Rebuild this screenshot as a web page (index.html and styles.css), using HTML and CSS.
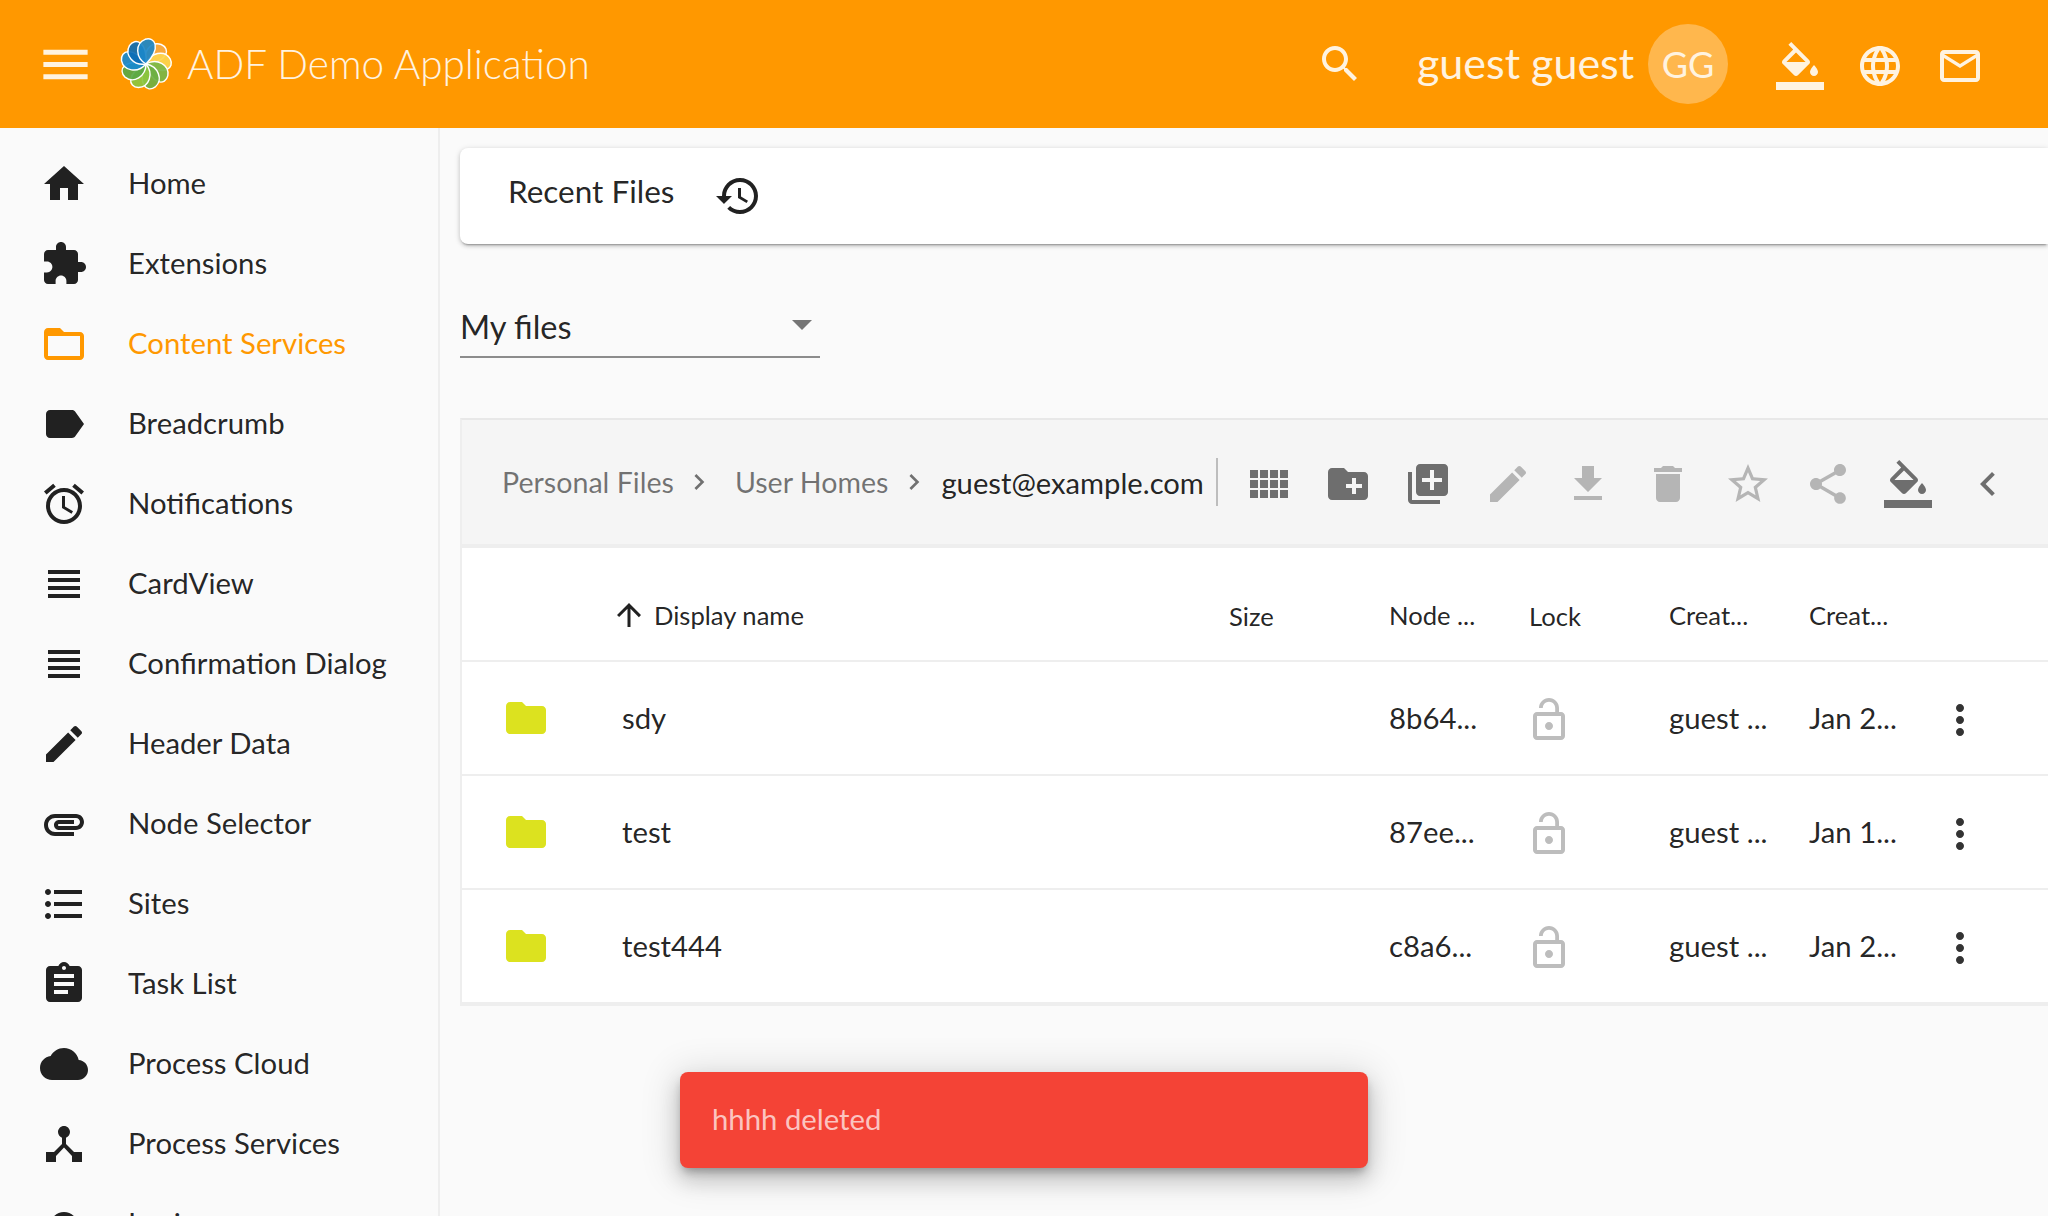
FILE: index.html
```html
<!DOCTYPE html>
<html lang="en">
<head>
    <meta charset="UTF-8">
    <title>ADF Demo Application</title>
    <link rel="stylesheet" href="styles.css">
</head>
<body>
    <!-- icon sprite -->
    <svg class="sprite" xmlns="http://www.w3.org/2000/svg">
        <symbol id="i-menu" viewBox="0 0 24 24"><path d="M3 18h18v-2H3v2zm0-5h18v-2H3v2zm0-7v2h18V6H3z"/></symbol>
        <symbol id="i-search" viewBox="0 0 24 24"><path d="M15.5 14h-.79l-.28-.27C15.41 12.59 16 11.11 16 9.5 16 5.91 13.09 3 9.5 3S3 5.91 3 9.5 5.91 16 9.5 16c1.61 0 3.09-.59 4.23-1.57l.27.28v.79l5 4.99L20.49 19l-4.99-5zm-6 0C7.01 14 5 11.99 5 9.5S7.01 5 9.5 5 14 7.01 14 9.5 11.99 14 9.5 14z"/></symbol>
        <symbol id="i-fill" viewBox="0 0 24 24"><path d="M16.56 8.94L7.62 0 6.21 1.41l2.38 2.38-5.15 5.15c-.59.59-.59 1.54 0 2.12l5.5 5.5c.29.29.68.44 1.06.44s.77-.15 1.06-.44l5.5-5.5c.59-.58.59-1.53 0-2.12zM5.21 10L10 5.21 14.79 10H5.21zM19 11.5s-2 2.17-2 3.5c0 1.1.9 2 2 2s2-.9 2-2c0-1.33-2-3.5-2-3.5z"/><path d="M0 20h24v4H0z"/></symbol>
        <symbol id="i-language" viewBox="0 0 24 24"><path d="M11.99 2C6.47 2 2 6.48 2 12s4.47 10 9.99 10C17.52 22 22 17.52 22 12S17.52 2 11.99 2zm6.93 6h-2.95c-.32-1.25-.78-2.45-1.38-3.56 1.84.63 3.37 1.91 4.33 3.56zM12 4.04c.83 1.2 1.48 2.53 1.91 3.96h-3.82c.43-1.43 1.08-2.76 1.91-3.96zM4.26 14C4.1 13.36 4 12.69 4 12s.1-1.36.26-2h3.38c-.08.66-.14 1.32-.14 2 0 .68.06 1.34.14 2H4.26zm.82 2h2.95c.32 1.25.78 2.45 1.38 3.56-1.84-.63-3.37-1.9-4.33-3.56zm2.95-8H5.08c.96-1.66 2.49-2.93 4.33-3.56C8.81 5.55 8.35 6.75 8.03 8zM12 19.96c-.83-1.2-1.48-2.53-1.91-3.96h3.82c-.43 1.43-1.08 2.76-1.91 3.96zM14.34 14H9.66c-.09-.66-.16-1.32-.16-2 0-.68.07-1.35.16-2h4.68c.09.65.16 1.32.16 2 0 .68-.07 1.34-.16 2zm.25 5.56c.6-1.11 1.06-2.31 1.38-3.56h2.95c-.96 1.65-2.49 2.93-4.33 3.56zM16.36 14c.08-.66.14-1.32.14-2 0-.68-.06-1.34-.14-2h3.38c.16.64.26 1.31.26 2s-.1 1.36-.26 2h-3.38z"/></symbol>
        <symbol id="i-mail" viewBox="0 0 24 24"><path d="M20 4H4c-1.1 0-1.99.9-1.99 2L2 18c0 1.1.9 2 2 2h16c1.1 0 2-.9 2-2V6c0-1.1-.9-2-2-2zm0 14H4V8l8 5 8-5v10zm-8-7L4 6h16l-8 5z"/></symbol>
        <symbol id="i-home" viewBox="0 0 24 24"><path d="M10 20v-6h4v6h5v-8h3L12 3 2 12h3v8z"/></symbol>
        <symbol id="i-extension" viewBox="0 0 24 24"><path d="M20.5 11H19V7c0-1.1-.9-2-2-2h-4V3.5C13 2.12 11.88 1 10.5 1S8 2.12 8 3.5V5H4c-1.1 0-1.99.9-1.99 2v3.8H3.5c1.49 0 2.7 1.21 2.7 2.7s-1.21 2.7-2.7 2.7H2V20c0 1.1.9 2 2 2h3.8v-1.5c0-1.49 1.21-2.7 2.7-2.7 1.49 0 2.7 1.21 2.7 2.7V22H17c1.1 0 2-.9 2-2v-4h1.5c1.38 0 2.5-1.12 2.5-2.5S21.88 11 20.5 11z"/></symbol>
        <symbol id="i-folder-open" viewBox="0 0 24 24"><path d="M20 6h-8l-2-2H4c-1.1 0-1.99.9-1.99 2L2 18c0 1.1.9 2 2 2h16c1.1 0 2-.9 2-2V8c0-1.1-.9-2-2-2zm0 12H4V8h16v10z"/></symbol>
        <symbol id="i-label" viewBox="0 0 24 24"><path d="M17.63 5.84C17.27 5.33 16.67 5 16 5L5 5.01C3.9 5.01 3 5.9 3 7v10c0 1.1.9 1.99 2 1.99L16 19c.67 0 1.27-.33 1.63-.84L22 12l-4.37-6.16z"/></symbol>
        <symbol id="i-alarm" viewBox="0 0 24 24"><path d="M22 5.72l-4.6-3.86-1.29 1.53 4.6 3.86L22 5.72zM7.88 3.39L6.6 1.86 2 5.71l1.29 1.53 4.59-3.85zM12.5 8H11v6l4.75 2.85.75-1.23-4-2.37V8zM12 4c-4.97 0-9 4.03-9 9s4.02 9 9 9c4.97 0 9-4.03 9-9s-4.03-9-9-9zm0 16c-3.87 0-7-3.13-7-7s3.13-7 7-7 7 3.13 7 7-3.13 7-7 7z"/></symbol>
        <symbol id="i-headline" viewBox="0 0 24 24"><path d="M4 15h16v-2H4v2zm0 4h16v-2H4v2zm0-8h16V9H4v2zm0-6v2h16V5H4z"/></symbol>
        <symbol id="i-edit" viewBox="0 0 24 24"><path d="M3 17.25V21h3.75L17.81 9.94l-3.75-3.75L3 17.25zM20.71 7.04c.39-.39.39-1.02 0-1.41l-2.34-2.34c-.39-.39-1.02-.39-1.41 0l-1.83 1.83 3.75 3.75 1.83-1.83z"/></symbol>
        <symbol id="i-attachment" viewBox="0 0 24 24"><path d="M2 12.5C2 9.46 4.46 7 7.5 7H18c2.21 0 4 1.79 4 4s-1.79 4-4 4H9.5C8.12 15 7 13.88 7 12.5S8.12 10 9.5 10H17v2H9.41c-.55 0-.55 1 0 1H18c1.1 0 2-.9 2-2s-.9-2-2-2H7.5C5.57 9 4 10.57 4 12.5S5.57 16 7.5 16H17v2H7.5C4.46 18 2 15.54 2 12.5z"/></symbol>
        <symbol id="i-list" viewBox="0 0 24 24"><path d="M4 10.5c-.83 0-1.5.67-1.5 1.5s.67 1.5 1.5 1.5 1.5-.67 1.5-1.5-.67-1.5-1.5-1.5zm0-6c-.83 0-1.5.67-1.5 1.5S3.17 7.5 4 7.5 5.5 6.83 5.5 6 4.83 4.5 4 4.5zm0 12c-.83 0-1.5.68-1.5 1.5s.68 1.5 1.5 1.5 1.5-.68 1.5-1.5-.67-1.5-1.5-1.5zM7 19h14v-2H7v2zm0-6h14v-2H7v2zm0-8v2h14V5H7z"/></symbol>
        <symbol id="i-assignment" viewBox="0 0 24 24"><path d="M19 3h-4.18C14.4 1.84 13.3 1 12 1c-1.3 0-2.4.84-2.82 2H5c-1.1 0-2 .9-2 2v14c0 1.1.9 2 2 2h14c1.1 0 2-.9 2-2V5c0-1.1-.9-2-2-2zm-7 0c.55 0 1 .45 1 1s-.45 1-1 1-1-.45-1-1 .45-1 1-1zm2 14H7v-2h7v2zm3-4H7v-2h10v2zm0-4H7V7h10v2z"/></symbol>
        <symbol id="i-cloud" viewBox="0 0 24 24"><path d="M19.35 10.04C18.67 6.59 15.64 4 12 4 9.11 4 6.6 5.64 5.35 8.04 2.34 8.36 0 10.91 0 14c0 3.31 2.69 6 6 6h13c2.76 0 5-2.24 5-5 0-2.64-2.05-4.78-4.65-4.96z"/></symbol>
        <symbol id="i-hub" viewBox="0 0 24 24"><path d="M17 16l-4-4V8.82C14.16 8.4 15 7.3 15 6c0-1.66-1.34-3-3-3S9 4.34 9 6c0 1.3.84 2.4 2 2.82V12l-4 4H3v5h5v-3.05l4-4.2 4 4.2V21h5v-5h-4z"/></symbol>
        <symbol id="i-login" viewBox="0 0 24 24"><path d="M12 6a7 7 0 1 0 0 14 7 7 0 0 0 0-14z"/></symbol>
        <symbol id="i-history" viewBox="0 0 24 24"><path d="M13 3c-4.97 0-9 4.03-9 9H1l3.89 3.89.07.14L9 12H6c0-3.87 3.13-7 7-7s7 3.13 7 7-3.13 7-7 7c-1.93 0-3.68-.79-4.94-2.06l-1.42 1.42C8.27 19.99 10.51 21 13 21c4.97 0 9-4.03 9-9s-4.03-9-9-9zm-1 5v5l4.28 2.54.72-1.21-3.5-2.08V8H12z"/></symbol>
        <symbol id="i-comfy" viewBox="0 0 24 24"><path d="M3 9h4V5H3v4zm0 5h4v-4H3v4zm5 0h4v-4H8v4zm5 0h4v-4h-4v4zM8 9h4V5H8v4zm5-4v4h4V5h-4zm5 9h4v-4h-4v4zM3 19h4v-4H3v4zm5 0h4v-4H8v4zm5 0h4v-4h-4v4zm5 0h4v-4h-4v4zm0-14v4h4V5h-4z"/></symbol>
        <symbol id="i-new-folder" viewBox="0 0 24 24"><path d="M20 6h-8l-2-2H4c-1.11 0-1.99.89-1.99 2L2 18c0 1.11.89 2 2 2h16c1.11 0 2-.89 2-2V8c0-1.11-.89-2-2-2zm-1 8h-3v3h-2v-3h-3v-2h3V9h2v3h3v2z"/></symbol>
        <symbol id="i-library" viewBox="0 0 24 24"><path d="M4 6H2v14c0 1.1.9 2 2 2h14v-2H4V6zm16-4H8c-1.1 0-2 .9-2 2v12c0 1.1.9 2 2 2h12c1.1 0 2-.9 2-2V4c0-1.1-.9-2-2-2zm-1 9h-4v4h-2v-4H9V9h4V5h2v4h4v2z"/></symbol>
        <symbol id="i-download" viewBox="0 0 24 24"><path d="M19 9h-4V3H9v6H5l7 7 7-7zM5 18v2h14v-2H5z"/></symbol>
        <symbol id="i-delete" viewBox="0 0 24 24"><path d="M6 19c0 1.1.9 2 2 2h8c1.1 0 2-.9 2-2V7H6v12zM19 4h-3.5l-1-1h-5l-1 1H5v2h14V4z"/></symbol>
        <symbol id="i-star" viewBox="0 0 24 24"><path d="M22 9.24l-7.19-.62L12 2 9.19 8.63 2 9.24l5.46 4.73L5.82 21 12 17.27 18.18 21l-1.63-7.03L22 9.24zM12 15.4l-3.76 2.27 1-4.28-3.32-2.88 4.38-.38L12 6.1l1.71 4.04 4.38.38-3.32 2.88 1 4.28L12 15.4z"/></symbol>
        <symbol id="i-share" viewBox="0 0 24 24"><path d="M18 16.08c-.76 0-1.44.3-1.96.77L8.91 12.7c.05-.23.09-.46.09-.7s-.04-.47-.09-.7l7.05-4.11c.54.5 1.25.81 2.04.81 1.66 0 3-1.34 3-3s-1.34-3-3-3-3 1.34-3 3c0 .24.04.47.09.7L8.04 9.81C7.5 9.31 6.79 9 6 9c-1.66 0-3 1.34-3 3s1.34 3 3 3c.79 0 1.5-.31 2.04-.81l7.12 4.16c-.05.21-.08.43-.08.65 0 1.61 1.31 2.92 2.92 2.92 1.61 0 2.92-1.31 2.92-2.92s-1.31-2.92-2.92-2.92z"/></symbol>
        <symbol id="i-left" viewBox="0 0 24 24"><path d="M15.41 7.41L14 6l-6 6 6 6 1.41-1.41L10.83 12z"/></symbol>
        <symbol id="i-right" viewBox="0 0 24 24"><path d="M10 6L8.59 7.41 13.17 12l-4.58 4.59L10 18l6-6z"/></symbol>
        <symbol id="i-up" viewBox="0 0 24 24"><path d="M4 12l1.41 1.41L11 7.83V20h2V7.83l5.58 5.59L20 12l-8-8-8 8z"/></symbol>
        <symbol id="i-folder" viewBox="0 0 24 24"><path d="M10 4H4c-1.1 0-1.99.9-1.99 2L2 18c0 1.1.9 2 2 2h16c1.1 0 2-.9 2-2V8c0-1.1-.9-2-2-2h-8l-2-2z"/></symbol>
        <symbol id="i-lock-open" viewBox="0 0 24 24"><path d="M12 17c1.1 0 2-.9 2-2s-.9-2-2-2-2 .9-2 2 .9 2 2 2zm6-9h-1V6c0-2.76-2.24-5-5-5S7 3.24 7 6h1.9c0-1.71 1.39-3.1 3.1-3.1 1.71 0 3.1 1.39 3.1 3.1v2H6c-1.1 0-2 .9-2 2v10c0 1.1.9 2 2 2h12c1.1 0 2-.9 2-2V10c0-1.1-.9-2-2-2zm0 12H6V10h12v10z"/></symbol>
        <symbol id="i-more" viewBox="0 0 24 24"><path d="M12 8c1.1 0 2-.9 2-2s-.9-2-2-2-2 .9-2 2 .9 2 2 2zm0 2c-1.1 0-2 .9-2 2s.9 2 2 2 2-.9 2-2-.9-2-2-2zm0 6c-1.1 0-2 .9-2 2s.9 2 2 2 2-.9 2-2-.9-2-2-2z"/></symbol>
        <symbol id="i-petal" viewBox="0 0 54 54" overflow="visible"><path d="M27 27C15 23 12 9 21 3c9-5 18 5 6 24z"/></symbol>
    </svg>

    <header class="topbar">
        <svg class="menu-icon"><use href="#i-menu"/></svg>
        <svg class="logo" viewBox="0 0 54 54">
            <g stroke="#fff" stroke-width="1.4" fill-opacity="0.92">
                <use href="#i-petal" width="54" height="54" fill="#f7a941" transform="rotate(52 27 27)"/>
                <use href="#i-petal" width="54" height="54" fill="#fdd54e" transform="rotate(92 27 27)"/>
                <use href="#i-petal" width="54" height="54" fill="#7ab648" transform="rotate(132 27 27)"/>
                <use href="#i-petal" width="54" height="54" fill="#6cb044" transform="rotate(172 27 27)"/>
                <use href="#i-petal" width="54" height="54" fill="#8cc63f" transform="rotate(212 27 27)"/>
                <use href="#i-petal" width="54" height="54" fill="#5aa845" transform="rotate(252 27 27)"/>
                <use href="#i-petal" width="54" height="54" fill="#1689d0" transform="rotate(292 27 27)"/>
                <use href="#i-petal" width="54" height="54" fill="#0b6db5" transform="rotate(332 27 27)"/>
                <use href="#i-petal" width="54" height="54" fill="#1b87c9" transform="rotate(12 27 27)"/>
            </g>
        </svg>
        <span class="app-title">ADF Demo Application</span>
        <div class="topbar-right">
            <svg class="top-icon search-icon"><use href="#i-search"/></svg>
            <span class="user-name">guest guest</span>
            <span class="avatar">GG</span>
            <svg class="top-icon fill-icon"><use href="#i-fill"/></svg>
            <svg class="top-icon lang-icon"><use href="#i-language"/></svg>
            <svg class="top-icon mail-icon"><use href="#i-mail"/></svg>
        </div>
    </header>

    <div class="layout">
        <nav class="sidenav">
            <a class="nav-item"><svg><use href="#i-home"/></svg><span>Home</span></a>
            <a class="nav-item"><svg><use href="#i-extension"/></svg><span>Extensions</span></a>
            <a class="nav-item active"><svg><use href="#i-folder-open"/></svg><span>Content Services</span></a>
            <a class="nav-item"><svg><use href="#i-label"/></svg><span>Breadcrumb</span></a>
            <a class="nav-item"><svg><use href="#i-alarm"/></svg><span>Notifications</span></a>
            <a class="nav-item"><svg><use href="#i-headline"/></svg><span>CardView</span></a>
            <a class="nav-item"><svg><use href="#i-headline"/></svg><span>Confirmation Dialog</span></a>
            <a class="nav-item"><svg><use href="#i-edit"/></svg><span>Header Data</span></a>
            <a class="nav-item"><svg><use href="#i-attachment"/></svg><span>Node Selector</span></a>
            <a class="nav-item"><svg><use href="#i-list"/></svg><span>Sites</span></a>
            <a class="nav-item"><svg><use href="#i-assignment"/></svg><span>Task List</span></a>
            <a class="nav-item"><svg><use href="#i-cloud"/></svg><span>Process Cloud</span></a>
            <a class="nav-item"><svg><use href="#i-hub"/></svg><span>Process Services</span></a>
            <a class="nav-item"><svg><use href="#i-login"/></svg><span>Login</span></a>
        </nav>

        <main class="content">
            <div class="tab-card">
                <span class="tab-label">Recent Files</span>
                <svg class="tab-icon"><use href="#i-history"/></svg>
            </div>

            <div class="site-select">
                <span>My files</span>
                <i class="select-arrow"></i>
            </div>

            <section class="panel">
                <div class="toolbar">
                    <div class="crumbs">
                        <span class="crumb">Personal Files</span>
                        <svg class="crumb-sep"><use href="#i-right"/></svg>
                        <span class="crumb">User Homes</span>
                        <svg class="crumb-sep last"><use href="#i-right"/></svg>
                        <span class="crumb current">guest@example.com</span>
                    </div>
                    <div class="divider"></div>
                    <button class="tool"><svg><use href="#i-comfy"/></svg></button>
                    <button class="tool"><svg><use href="#i-new-folder"/></svg></button>
                    <button class="tool"><svg><use href="#i-library"/></svg></button>
                    <button class="tool off"><svg><use href="#i-edit"/></svg></button>
                    <button class="tool off"><svg><use href="#i-download"/></svg></button>
                    <button class="tool off"><svg><use href="#i-delete"/></svg></button>
                    <button class="tool off"><svg><use href="#i-star"/></svg></button>
                    <button class="tool off"><svg><use href="#i-share"/></svg></button>
                    <button class="tool"><svg><use href="#i-fill"/></svg></button>
                    <button class="tool"><svg><use href="#i-left"/></svg></button>
                </div>

                <div class="row head">
                    <div class="cell c-icon"></div>
                    <div class="cell c-name"><svg class="sort-icon"><use href="#i-up"/></svg>Display name</div>
                    <div class="cell c-size">Size</div>
                    <div class="cell c-node">Node ...</div>
                    <div class="cell c-lock">Lock</div>
                    <div class="cell c-by">Creat...</div>
                    <div class="cell c-date">Creat...</div>
                </div>
                <div class="row">
                    <div class="cell c-icon"><svg class="folder"><use href="#i-folder"/></svg></div>
                    <div class="cell c-name">sdy</div>
                    <div class="cell c-size"></div>
                    <div class="cell c-node">8b64...</div>
                    <div class="cell c-lock"><svg class="lock"><use href="#i-lock-open"/></svg></div>
                    <div class="cell c-by">guest ...</div>
                    <div class="cell c-date">Jan 2...</div>
                    <div class="cell c-menu"><svg class="more"><use href="#i-more"/></svg></div>
                </div>
                <div class="row">
                    <div class="cell c-icon"><svg class="folder"><use href="#i-folder"/></svg></div>
                    <div class="cell c-name">test</div>
                    <div class="cell c-size"></div>
                    <div class="cell c-node">87ee...</div>
                    <div class="cell c-lock"><svg class="lock"><use href="#i-lock-open"/></svg></div>
                    <div class="cell c-by">guest ...</div>
                    <div class="cell c-date">Jan 1...</div>
                    <div class="cell c-menu"><svg class="more"><use href="#i-more"/></svg></div>
                </div>
                <div class="row">
                    <div class="cell c-icon"><svg class="folder"><use href="#i-folder"/></svg></div>
                    <div class="cell c-name">test444</div>
                    <div class="cell c-size"></div>
                    <div class="cell c-node">c8a6...</div>
                    <div class="cell c-lock"><svg class="lock"><use href="#i-lock-open"/></svg></div>
                    <div class="cell c-by">guest ...</div>
                    <div class="cell c-date">Jan 2...</div>
                    <div class="cell c-menu"><svg class="more"><use href="#i-more"/></svg></div>
                </div>
            </section>
        </main>
    </div>

    <div class="snackbar">hhhh deleted</div>
</body>
</html>
```

FILE: styles.css
```css
/* Page */
html, body {
    height: 100%;
}
body {
    margin: 0;
    overflow: hidden;
    background-color: #fafafa;
    color: rgba(0, 0, 0, 0.87);
    font-family: "Lato", "Noto Sans", sans-serif;
    font-size: 29.3px;
}
.sprite {
    display: none;
}
svg {
    fill: currentColor;
    flex: none;
}

/* Top bar */
.topbar {
    display: flex;
    align-items: center;
    height: 128px;
    padding-left: 36px;
    background-color: #ff9800;
    color: #fff3e0;
}
.menu-icon {
    width: 59px;
    height: 59px;
}
.logo {
    width: 54px;
    height: 54px;
    margin-left: 24px;
}
.app-title {
    margin: -2px 0 0 14px;
    font-size: 40.5px;
    font-weight: 300;
}
.topbar-right {
    display: flex;
    align-items: center;
    margin-left: auto;
}
.top-icon {
    width: 48px;
    height: 48px;
}
.search-icon {
    margin-right: 53px;
}
.user-name {
    width: 231px;
    margin-top: -3px;
    font-size: 43px;
}
.avatar {
    display: flex;
    align-items: center;
    justify-content: center;
    width: 80px;
    height: 80px;
    border-radius: 50%;
    background-color: rgba(255, 255, 255, 0.3);
    font-size: 36px;
}
.fill-icon {
    margin-left: 48px;
    margin-top: 4px;
}
.lang-icon {
    margin-left: 32px;
    margin-top: 4px;
}
.mail-icon {
    margin-left: 32px;
    margin-top: 4px;
    margin-right: 64px;
}

/* Side navigation */
.layout {
    display: flex;
    height: calc(100% - 128px);
}
.sidenav {
    flex: none;
    width: 440px;
    box-sizing: border-box;
    padding-top: 16px;
    border-right: 2px solid #eeeeee;
    overflow: hidden;
}
.nav-item {
    display: flex;
    align-items: center;
    gap: 40px;
    height: 80px;
    padding-left: 40px;
}
.nav-item span {
    margin-top: -3px;
}
.nav-item svg {
    width: 48px;
    height: 48px;
    color: #212121;
}
.nav-item.active,
.nav-item.active svg {
    color: #ff9800;
}

/* Main area */
.content {
    flex: 1;
    min-width: 0;
    padding: 20px 0 0 20px;
    overflow: hidden;
}
.tab-card {
    display: flex;
    align-items: center;
    height: 96px;
    padding-left: 48px;
    background-color: #fff;
    border-radius: 8px 0 0 8px;
    box-shadow: 0 3px 2px -2px rgba(0, 0, 0, 0.3), 0 2px 4px rgba(0, 0, 0, 0.14), 0 1px 6px rgba(0, 0, 0, 0.12);
}
.tab-label {
    margin-bottom: 10px;
    font-size: 31.5px;
}
.tab-icon {
    width: 48px;
    height: 48px;
    margin: -1px 0 0 40px;
}
.site-select {
    display: flex;
    align-items: center;
    justify-content: space-between;
    box-sizing: border-box;
    width: 360px;
    height: 61px;
    margin-top: 53px;
    padding: 0 8px 0 0;
    border-bottom: 2px solid #8c8c8c;
    font-size: 32.5px;
}
.select-arrow {
    width: 0;
    height: 0;
    margin-top: -3px;
    border-left: 10px solid transparent;
    border-right: 10px solid transparent;
    border-top: 10px solid #757575;
}

/* Data panel */
.panel {
    margin-top: 60px;
    background-color: #fff;
    border-left: 2px solid #eeeeee;
    border-top: 2px solid #e8e8e8;
    border-bottom: 4px solid #eeeeee;
}
.toolbar {
    display: flex;
    align-items: center;
    height: 124px;
    background-color: #f5f5f5;
    border-bottom: 4px solid #eeeeee;
}
.crumbs {
    display: flex;
    align-items: center;
    width: 754px;
    padding-left: 40px;
    box-sizing: border-box;
    font-size: 28.6px;
}
.crumb {
    color: rgba(0, 0, 0, 0.54);
}
.crumb.current {
    color: rgba(0, 0, 0, 0.87);
    font-size: 29.2px;
}
.crumb-sep {
    width: 32px;
    height: 32px;
    margin: 0 20px 0 9px;
    color: rgba(0, 0, 0, 0.54);
}
.crumb-sep.last {
    margin: 0 11px 0 10px;
}
.divider {
    width: 2px;
    height: 48px;
    margin-right: 10px;
    background-color: #bdbdbd;
}
.tool {
    display: flex;
    align-items: center;
    justify-content: center;
    width: 80px;
    height: 80px;
    padding: 0;
    border: 0;
    background: none;
    color: #6e6e6e;
}
.tool.off {
    color: #b5b5b5;
}
.tool svg {
    width: 48px;
    height: 48px;
    margin-top: 4px;
}

/* Table rows */
.row {
    display: flex;
    align-items: center;
    height: 114px;
    box-sizing: border-box;
    border-bottom: 2px solid #eeeeee;
}
.row:last-child {
    border-bottom: 0;
    height: 112px;
}
.row.head {
    padding-top: 23px;
    font-size: 25.6px;
}
.cell {
    display: flex;
    align-items: center;
    box-sizing: border-box;
}
.c-name, .c-node, .c-by, .c-date {
    margin-top: -2px;
}
.c-icon { width: 160px; padding-left: 40px; }
.c-name { width: 607px; }
.c-size { width: 160px; }
.c-node { width: 140px; }
.c-lock { width: 140px; }
.c-by   { width: 140px; }
.c-date { width: 127px; }
.c-menu { width: 48px; }
.sort-icon {
    width: 36px;
    height: 36px;
    margin: 0 7px 0 -11px;
}
.folder {
    width: 48px;
    height: 48px;
    color: #dce21f;
}
.lock {
    width: 48px;
    height: 48px;
    margin-top: 4px;
    color: #bdbdbd;
}
.c-lock .lock {
    margin-left: -4px;
}
.more {
    width: 48px;
    height: 48px;
    margin-top: 4px;
    color: #333;
}

/* Snackbar */
.snackbar {
    position: absolute;
    left: 680px;
    bottom: 48px;
    display: flex;
    align-items: center;
    width: 688px;
    height: 96px;
    box-sizing: border-box;
    padding: 0 0 3px 32px;
    border-radius: 8px;
    background-color: #f44336;
    color: rgba(255, 255, 255, 0.7);
    box-shadow: 0 6px 10px -3px rgba(0, 0, 0, 0.3), 0 12px 20px 2px rgba(0, 0, 0, 0.14), 0 4px 36px 6px rgba(0, 0, 0, 0.12);
}
```
